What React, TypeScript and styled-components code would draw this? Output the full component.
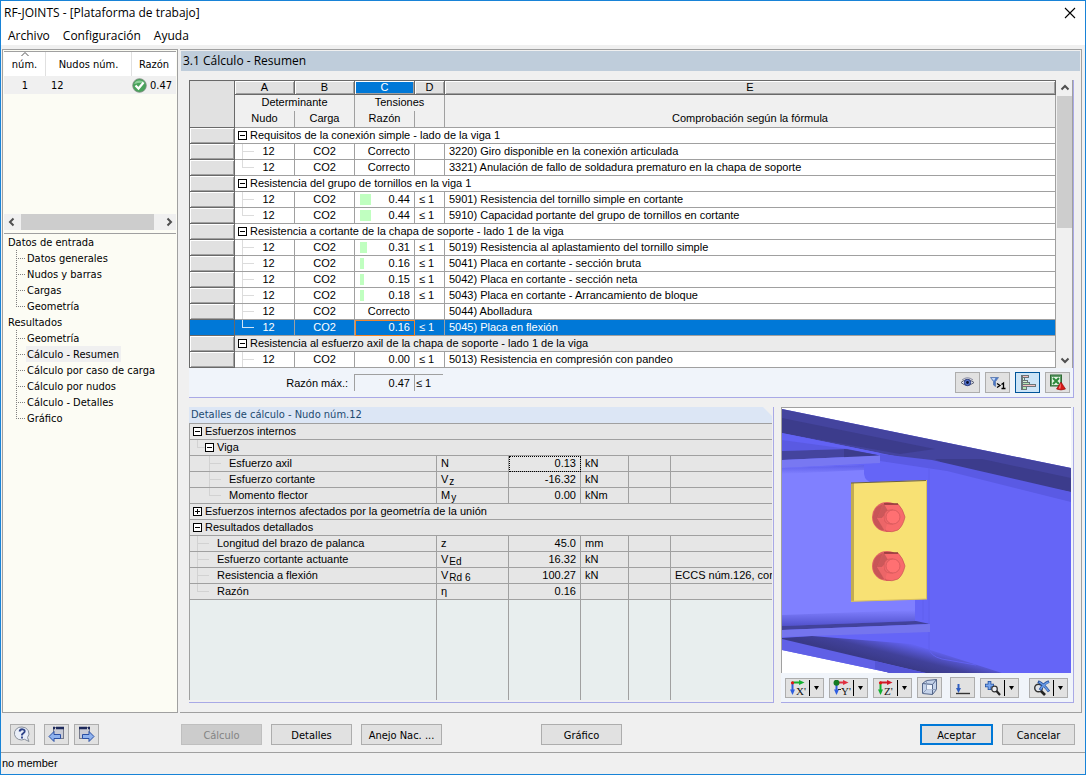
import React from "react";
import styled, { createGlobalStyle, css } from "styled-components";

const UI_FONT = '"Open Sans", "Segoe UI", sans-serif';
const FORM_FONT = '"DejaVu Sans Condensed", Tahoma, sans-serif';
const GRID_FONT = '"Liberation Sans", Arial, sans-serif';

const line = "#a0a0a0";
const lavender = "#a9a9e6";
const accent = "#0078d7";

const GlobalStyle = createGlobalStyle`
  *, *::before, *::after { box-sizing: border-box; }
  body { margin: 0; background: #f0f0f0; color: #000; font-family: ${FORM_FONT}; font-size: 11px; line-height: 16px; }
  button { font: inherit; color: inherit; margin: 0; padding: 0; border-radius: 0; }
  table { border-collapse: separate; border-spacing: 0; table-layout: fixed; width: 100%; }
  th, td { padding: 0; font-weight: 400; white-space: nowrap; overflow: hidden; }
  ul { list-style: none; margin: 0; padding: 0; }
  h1, h2, p { margin: 0; font: inherit; }
  svg { display: block; }
`;

/* Window frame */

const Window = styled.div`
  display: flex;
  flex-direction: column;
  min-height: 100vh;
  border: 1px solid #1883d7;
  background: #f0f0f0;
`;

const TitleBar = styled.header`
  display: flex;
  align-items: center;
  justify-content: space-between;
  height: 24px;
  padding: 0 9px 0 3px;
  background: #fff;
  font: 12px/24px ${UI_FONT};
`;

const CloseButton = styled.button`
  border: 0;
  background: none;
`;

const MenuBar = styled.nav`
  display: flex;
  gap: 13px;
  height: 20px;
  padding: 0 7px;
  background: #fff;
  font: 12px/22px ${UI_FONT};
`;

const MenuItem = styled.button`
  border: 0;
  background: none;
`;

const Body = styled.div`
  display: flex;
  flex: 1;
  gap: 2px;
  padding: 4px 3px 0 1px;
`;

/* Left side: list of cases and navigation tree */

const Sidebar = styled.aside`
  display: flex;
  flex-direction: column;
  flex: none;
  width: 176px;
  padding: 1px 1px 0;
  border: 1px solid ${line};
  background: #fcfcf4;
`;

const CaseList = styled.div`
  display: flex;
  flex-direction: column;
  justify-content: space-between;
  height: 179px;
  border-top: 1px solid ${line};
`;

const CaseHead = styled.th`
  height: 24px;
  padding-bottom: 2px;
  border-right: 1px solid #e0e0e0;
  background: #fff;
  vertical-align: bottom;
  line-height: 18px;
  &:last-child { border-right: 0; }
`;

const SortMark = styled.svg`
  margin: 0 auto;
  height: 4px;
`;

const CaseCell = styled.td<{ $inset?: number }>`
  height: 18px;
  padding-top: 1px;
  padding-left: ${(p) => p.$inset ?? 0}px;
  background: #f0f0f0;
  text-align: ${(p) => (p.$inset === undefined ? "center" : "left")};
`;

const Status = styled.span`
  display: flex;
  align-items: center;
  gap: 3px;
`;

const ScrollTrack = styled.div<{ $vertical?: boolean }>`
  display: flex;
  flex: none;
  flex-direction: ${(p) => (p.$vertical ? "column" : "row")};
  ${(p) => (p.$vertical ? `width: 16px; margin-left: 1px; border-right: 1px solid ${line};` : "height: 16px;")}
  background: #f0f0f0;
`;

const ScrollArrow = styled.button<{ $push?: boolean }>`
  display: grid;
  place-items: center;
  min-width: 15px;
  min-height: 16px;
  border: 0;
  background: none;
  margin-left: ${(p) => (p.$push ? "auto" : 0)};
`;

const ScrollThumb = styled.div<{ $size: string; $vertical?: boolean }>`
  background: #cdcdcd;
  ${(p) => (p.$vertical ? `height: ${p.$size}; margin-bottom: auto;` : `width: ${p.$size}; margin-left: 2px;`)}
`;

const Tree = styled.nav`
  flex: 1;
  margin-top: 3px;
  border-top: 1px solid ${line};
  line-height: 18px;
`;

const TreeTitle = styled.div`
  height: 16px;
  padding-left: 4px;
`;

const TreeItem = styled.li<{ $last?: boolean }>`
  height: 16px;
  padding-left: 22px;
  background-repeat: no-repeat;
  background-image: repeating-linear-gradient(to bottom, #808080 0 1px, transparent 1px 2px),
    repeating-linear-gradient(to right, #808080 0 1px, transparent 1px 2px);
  background-size: 1px ${(p) => (p.$last ? "9px" : "16px")}, 9px 1px;
  background-position: 12px 0, 12px 8px;
`;

const TreeLink = styled.a<{ $active?: boolean }>`
  display: block;
  width: max-content;
  height: 16px;
  padding: 0 2px 0 1px;
  color: inherit;
  text-decoration: none;
  background: ${(p) => (p.$active ? "#f0f0f0" : "transparent")};
`;

/* Right side */

const Main = styled.main`
  display: flex;
  flex: 1;
  flex-direction: column;
  min-width: 0;
  padding: 1px 1px 9px;
  border: solid ${line};
  border-width: 1px 1px 1px 0;
`;

const PageTitle = styled.h1`
  height: 20px;
  padding-left: 2px;
  background: #bfcddb;
  font: 12px/20px ${UI_FONT};
`;

const Sections = styled.div`
  display: flex;
  flex: 1;
  flex-direction: column;
  gap: 9px;
  padding: 9px 6px 0 8px;
`;

const ResultPanel = styled.section`
  border: solid ${lavender};
  border-width: 0 1px 1px 0;
  background: #f0f4fa;
`;

const ResultArea = styled.div`
  display: flex;
  background: #f0f0f0;
  font-family: ${GRID_FONT};
`;

const GridTable = styled.table`
  flex: 1;
  border: solid #696969;
  border-width: 1px 0 0 1px;
  line-height: 15px;
  text-align: center;
`;

const raised = css`
  background: #e1e1e1;
  box-shadow: inset 1px 1px #fff, inset -1px -1px ${line};
  border: solid #696969;
  border-width: 0 1px 1px 0;
`;

const Corner = styled.td`
  background: #e1e1e1;
  border: solid #696969;
  border-width: 0 1px 1px 0;
`;

const ColumnLetter = styled.th<{ $active?: boolean }>`
  ${raised}
  height: 14px;
  line-height: 13px;
  ${(p) => p.$active && `background: ${accent}; color: #fff;`}
`;

const ColumnGroup = styled.th`
  height: 16px;
  border-right: 1px solid ${line};
  vertical-align: top;
`;

const ColumnName = styled.th`
  height: 17px;
  border: solid ${line};
  border-width: 0 1px 1px 0;
  vertical-align: top;
`;

const RowHead = styled.td<{ $active?: boolean }>`
  ${raised}
  height: 16px;
  ${(p) => p.$active && `background: ${accent}; box-shadow: none;`}
`;

const GroupCell = styled.td<{ $shaded?: boolean }>`
  height: 16px;
  border: solid ${line};
  border-width: 0 1px 1px 0;
  background: ${(p) => (p.$shaded ? "#ebebeb" : "#fff")};
  text-align: left;
`;

const GroupLabel = styled.div<{ $depth?: number }>`
  display: flex;
  align-items: center;
  gap: 3px;
  padding-left: ${(p) => 3 + (p.$depth ?? 0) * 12}px;
`;

const Toggle = styled.button`
  display: block;
  flex: none;
  width: 9px;
  height: 9px;
  border: 0;
  background: none;
`;

const DataRow = styled.tr<{ $active?: boolean }>`
  background: ${(p) => (p.$active ? accent : "#fff")};
  color: ${(p) => (p.$active ? "#fff" : "#000")};
`;

const DataCell = styled.td`
  height: 16px;
  border: solid ${line};
  border-width: 0 1px 1px 0;
`;

const branch = css<{ $x: number; $last?: boolean; $tone?: string }>`
  background-repeat: no-repeat;
  background-image: linear-gradient(${(p) => p.$tone ?? "#dcdcdc"}, ${(p) => p.$tone ?? "#dcdcdc"}),
    linear-gradient(${(p) => p.$tone ?? "#dcdcdc"}, ${(p) => p.$tone ?? "#dcdcdc"});
  background-size: 1px ${(p) => (p.$last ? "8px" : "100%")}, 12px 1px;
  background-position: ${(p) => p.$x}px 0, ${(p) => p.$x}px 7px;
`;

const NodeCell = styled(DataCell)<{ $x: number; $last?: boolean; $tone?: string }>`
  ${branch}
  padding-left: 8px;
`;

const RatioCell = styled(DataCell)<{ $focus?: boolean }>`
  ${(p) => p.$focus && "outline: 1px solid #f0862c; outline-offset: -1px;"}
`;

const RatioContent = styled.div`
  display: flex;
  align-items: center;
  justify-content: space-between;
  padding: 0 4px 0 5px;
`;

const RatioBar = styled.span`
  height: 11px;
  background: #c0ffc0;
`;

const LimitCell = styled(DataCell)`
  padding-left: 4px;
  text-align: left;
`;

const FormulaCell = styled(DataCell)`
  padding-left: 4px;
  text-align: left;
`;

const ResultFooter = styled.div`
  display: flex;
  align-items: center;
  height: 29px;
  padding-right: 3px;
`;

const MaxLabel = styled.label`
  width: 165px;
  padding-right: 6px;
  text-align: right;
  font-family: ${GRID_FONT};
`;

const MaxBox = styled.output<{ $w: number; $right?: boolean }>`
  width: ${(p) => p.$w}px;
  height: 17px;
  padding: 0 4px 0 1px;
  border: solid ${line};
  border-width: 1px 0 0 1px;
  text-align: ${(p) => (p.$right ? "right" : "left")};
  font-family: ${GRID_FONT};
`;

const Tools = styled.div`
  display: flex;
  gap: 5px;
  margin-left: auto;
`;

const IconButton = styled.button<{ $active?: boolean }>`
  display: grid;
  place-items: center;
  width: 25px;
  height: 21px;
  border: 1px solid ${(p) => (p.$active ? "#005499" : "#adadad")};
  background: ${(p) => (p.$active ? "#cce4f7" : "#e1e1e1")};
`;

/* Lower half */

const Lower = styled.div`
  display: flex;
  flex: 1;
  gap: 7px;
`;

const DetailPanel = styled.section`
  display: flex;
  flex: 1;
  flex-direction: column;
  min-width: 0;
  padding: 0 1px 2px 0;
  border: solid ${lavender};
  border-width: 0 1px 1px 0;
`;

const DetailTitle = styled.h2`
  height: 16px;
  padding-left: 2px;
  background: #dce6f5;
  color: #1c4a70;
  clip-path: polygon(0 0, calc(100% - 9px) 0, 100% 9px, 100% 100%, 0 100%);
`;

const DetailArea = styled.div`
  display: flex;
  flex: 1;
  flex-direction: column;
  border: solid ${line};
  border-width: 1px 0 0 1px;
  background: #e8eeee;
  font-family: ${GRID_FONT};
`;

const DetailTable = styled.table`
  line-height: 15px;
`;

const DetailGroup = styled.td<{ $x: number; $last?: boolean; $tone?: string }>`
  height: 16px;
  border-bottom: 1px solid ${line};
  background-color: #e6e6e6;
  ${(p) => p.$x > 0 && branch}
`;

const DetailCell = styled.td<{ $right?: boolean; $focus?: boolean }>`
  height: 16px;
  padding: 0 4px 0 4px;
  border: solid ${line};
  border-width: 0 1px 1px 0;
  background: #e6e6e6;
  text-align: ${(p) => (p.$right ? "right" : "left")};
  ${(p) => p.$focus && "outline: 1px dotted #000; outline-offset: -1px;"}
  &:last-child { border-right: 0; }
`;

const DetailName = styled(DetailCell)<{ $x: number; $last?: boolean; $tone?: string }>`
  background-color: #e6e6e6;
  ${branch}
  padding-left: ${(p) => p.$x + 20}px;
`;

const Sub = styled.sub`
  margin-left: 1px;
  font-size: 10px;
  line-height: 8px;
  vertical-align: -2px;
`;

const DetailFiller = styled.div`
  display: grid;
  flex: 1;
  grid-template-columns: 247px 72px 72px 48px 42px 1fr;
`;

const FillerCell = styled.div`
  border-right: 1px solid ${line};
  &:last-child { border-right: 0; }
`;

const ViewPanel = styled.section`
  display: flex;
  flex: none;
  flex-direction: column;
  width: 293px;
  border: solid ${lavender};
  border-width: 0 1px 1px 0;
  background: #f0f4fa;
`;

const Viewport = styled.div`
  flex: 1;
  min-height: 200px;
  margin-right: 2px;
  border: solid ${line};
  border-width: 1px 0 0 1px;
  background: #fff;
  contain: size;
`;

const Scene = styled.svg`
  width: 100%;
  height: 100%;
`;

const ViewTools = styled.div`
  display: flex;
  align-items: center;
  gap: 5px;
  height: 29px;
  padding-left: 4px;
`;

const SplitButton = styled.button`
  display: grid;
  grid-template-columns: 23px 14px;
  align-items: center;
  justify-items: center;
  width: 39px;
  height: 20px;
  border: 1px solid #adadad;
  background: #e1e1e1;
`;

const DropMark = styled.span`
  display: grid;
  place-items: center;
  width: 14px;
  height: 16px;
  border-left: 1px solid #000;
`;

const ToolGap = styled.span<{ $w: number }>`
  width: ${(p) => p.$w}px;
  margin-left: -5px;
`;

/* Bottom */

const Footer = styled.footer`
  display: flex;
  gap: 9px;
  height: 39px;
  padding: 11px 10px 0 9px;
`;

const FooterGroup = styled.div<{ $w?: number; $gap: number; $end?: boolean }>`
  display: flex;
  gap: ${(p) => p.$gap}px;
  width: ${(p) => (p.$w ? `${p.$w}px` : "auto")};
  margin-left: ${(p) => (p.$end ? "auto" : 0)};
`;

const PushButton = styled.button<{ $w: number; $primary?: boolean; $far?: boolean }>`
  width: ${(p) => p.$w}px;
  height: 21px;
  margin-left: ${(p) => (p.$far ? 90 : 0)}px;
  padding-top: 2px;
  border: ${(p) => (p.$primary ? `2px solid ${accent}` : "1px solid #adadad")};
  background: #e1e1e1;
  line-height: 15px;
  &:disabled { background: #ccc; border-color: #bfbfbf; color: #838383; }
`;

const StatusBar = styled.p`
  height: 22px;
  padding-left: 1px;
  border-top: 1px solid ${line};
  font: 11px/20px ${GRID_FONT};
`;

/* Drawings */

const Chevron = ({ d }: { d: string }) => (
  <svg width="10" height="10" viewBox="0 0 10 10" fill="none" stroke="#505050" strokeWidth="2">
    <path d={d} />
  </svg>
);

const ToggleMark = ({ open }: { open: boolean }) => (
  <Toggle type="button" aria-label={open ? "Contraer" : "Expandir"}>
    <svg width="9" height="9" shapeRendering="crispEdges">
      <rect x="0.5" y="0.5" width="8" height="8" fill="#fff" stroke="#000" />
      <path d={open ? "M2 4.5h5" : "M2 4.5h5M4.5 2v5"} stroke="#000" />
    </svg>
  </Toggle>
);

const CheckIcon = () => (
  <svg width="15" height="15" viewBox="0 0 15 15">
    <circle cx="7.5" cy="7.5" r="6.8" fill="#4aa35c" stroke="#7d8a80" strokeWidth="0.8" />
    <path d="M2 6a6 5 0 0 1 11-1q-5-1-11 1z" fill="#8fcf9b" />
    <path d="M3.5 7.5l3 3 5-6" fill="none" stroke="#fff" strokeWidth="2.2" />
  </svg>
);

const EyeIcon = () => (
  <svg width="15" height="13" viewBox="0 0 15 13">
    <path d="M1 6.5Q7 1 14 6.5Q7 12 1 6.5z" fill="#f2f4fb" stroke="#555b70" />
    <circle cx="7.5" cy="6.5" r="3.2" fill="#5474cf" stroke="#2b3c80" />
    <circle cx="7.5" cy="6.5" r="1.4" fill="#0b1030" />
    <path d="M2 4Q7.500-0.500 13 4" fill="none" stroke="#8286a0" />
  </svg>
);

const FilterIcon = () => (
  <svg width="18" height="16" viewBox="0 0 18 16">
    <path d="M1.500 2.500h8l-3 4v5l-2-1.500v-3.500z" fill="#4a78c8" stroke="#5a78b0" strokeWidth="0.800" />
    <path d="M2.500 3h4l-1.500 3z" fill="#c4d8f6" />
    <path d="M8 8.500l3 2-3 2" fill="none" stroke="#000" strokeWidth="1.300" />
    <path d="M12.500 9.500l2-1.500v6M12.500 13.500h4" fill="none" stroke="#000" strokeWidth="1.300" />
  </svg>
);

const BarsIcon = () => (
  <svg width="17" height="17" viewBox="0 0 17 17" shapeRendering="crispEdges">
    <path d="M2.500 1v15" stroke="#6a7478" />
    <g strokeWidth="1" stroke="#6a7478">
      <path d="M3 1.500h6v2H3z" fill="#f5c0c0" />
      <path d="M3 3.500h2v3H3z" fill="#d5f3d5" />
      <path d="M3 6.500h5v2H3z" fill="#d5f3d5" />
      <path d="M3 8.500h7v2H3z" fill="#b5e8b5" />
      <path d="M3 10.500h13v2H3z" fill="#f5c0c0" />
      <path d="M3 12.500h4v3H3z" fill="#b5e8b5" />
    </g>
  </svg>
);

const ExcelIcon = () => (
  <svg width="17" height="17" viewBox="0 0 17 17">
    <rect x="1.500" y="1" width="11" height="11" fill="#5f9c68" stroke="#2e6b36" />
    <rect x="3" y="3" width="8" height="8" fill="#e4f2e4" />
    <path d="M4 4l6 6M10 4l-6 6" stroke="#2b8a3a" strokeWidth="2" />
    <path d="M12 8l4.500 7q-4.500 2-9 0z" fill="#d81818" stroke="#8c0c0c" strokeWidth="0.600" />
    <path d="M12 9l-2.500 5.500h2z" fill="#ff7d7d" />
  </svg>
);

const HelpIcon = () => (
  <svg width="17" height="17" viewBox="0 0 17 17">
    <path d="M8 1a7 6.500 0 0 1 5.500 10.500L15 15.500l-4.500-2.200A7 6.500 0 1 1 8 1z" fill="#e9eef8" stroke="#8a919c" />
    <path d="M5.500 5.500q.5-2.500 3.200-2.200 2.700.5 1.800 2.800L8 8.500V9.500M8 10.500v2" fill="none" stroke="#2d4288" strokeWidth="1.800" />
  </svg>
);

const WindowArrowIcon = ({ next }: { next?: boolean }) => (
  <svg width="17" height="17" viewBox="0 0 17 17">
    <g transform={next ? "matrix(-1 0 0 1 17 0)" : undefined}>
      <rect x="5.500" y="1.500" width="10" height="11" fill="#c9cbd6" stroke="#777b8c" />
      <path d="M5 2h11" stroke="#1e2a5c" strokeWidth="2.500" strokeDasharray="2 1 8 0" />
    </g>
    <path
      d={next ? "M16 10.500l-5-5v3H4.500v4H11v3z" : "M1 10.500l5-5v3h6.500v4H6v3z"}
      fill="#8fb2ee"
      stroke="#2a4fa4"
    />
  </svg>
);

const AxisIcon = ({ name, across, down, minus }: { name: string; across: string; down: string; minus?: boolean }) => (
  <svg width="18" height="16" viewBox="0 0 18 16">
    <path d="M3 2.500h8" stroke={across} strokeWidth="2" />
    <path d="M10 0l5.500 2.500L10 5z" fill={across} />
    <path d="M3.500 3v8" stroke={down} strokeWidth="2" />
    <path d="M1 9.500h5L3.500 15z" fill={down} />
    <circle cx="3.500" cy="2.800" r={minus ? 3 : 1.600} fill={minus ? "#137a22" : "#e01818"} />
    {minus && <path d="M5 9.500h3" stroke="#222" />}
    <text x={minus ? 8 : 7} y="15" fontFamily="Liberation Serif, serif" fontSize="11" fill="#111">
      {name}
    </text>
  </svg>
);

const CubeIcon = () => (
  <svg width="17" height="17" viewBox="0 0 17 17" fill="none" stroke="#55678a">
    <path d="M5.500 1.500l10-1v10l-4 5-10-1v-10z" fill="#c5d3ea" />
    <path d="M1.500 4.500l10 1v10M11.500 5.500l4-5" />
    <path d="M5.500 1.500v9l10 0M5.500 10.500l-4 4" stroke="#8c9dba" />
    <path d="M6 6l5 0v4.500H6z" fill="#eef3fb" stroke="none" />
  </svg>
);

const BaseIcon = () => (
  <svg width="16" height="16" viewBox="0 0 16 16">
    <path d="M3.500 4v5" stroke="#2f5ec0" strokeWidth="2" />
    <path d="M1 8h5l-2.500 5z" fill="#2f5ec0" />
    <path d="M1 13.500h14" stroke="#333" strokeWidth="1.400" />
  </svg>
);

const ZoomIcon = ({ clear }: { clear?: boolean }) =>
  clear ? (
    <svg width="18" height="16" viewBox="0 0 18 16">
      <circle cx="5.500" cy="8" r="3.800" fill="#dfe3ea" stroke="#333" strokeWidth="1.400" />
      <path d="M8 11l4 4" stroke="#222" strokeWidth="2.600" />
      <path d="M5 1.500q6 3 11 10M16 1.500Q10 4 7 10" fill="none" stroke="#234f9c" strokeWidth="2.800" />
      <path d="M6 2q5.500 3 9.500 9M15.500 2Q10 4.500 7.500 9.500" fill="none" stroke="#6a9be6" strokeWidth="1.400" />
    </svg>
  ) : (
    <svg width="18" height="16" viewBox="0 0 18 16">
      <path d="M5.500 1v9M1 5.500h9" stroke="#234f9c" strokeWidth="3.600" />
      <path d="M5.500 1.700v7.600M1.700 5.500h7.600" stroke="#7aa7ee" strokeWidth="2" />
      <circle cx="10.500" cy="9" r="2.800" fill="#eceff5" stroke="#333" strokeWidth="1.200" />
      <path d="M12.500 11l3.500 4" stroke="#222" strokeWidth="2.200" />
    </svg>
  );

const Bolt = ({ y }: { y: number }) => (
  <g transform={`translate(107 ${y})`}>
    <ellipse cx="-2" cy="0" rx="15" ry="15" fill="#e06264" />
    <path d="M-12-10L-6-13L-12 1L-5 13L-8 13Q-17 8-16-1Q-15-7-12-10z" fill="#c85557" />
    <path d="M-5-13H9Q14-8 16 0Q14 9 9 13Q3 16-3 14L-12 1z" fill="#f86a6c" stroke="#c04b4f" strokeWidth="0.600" />
    <path d="M-5-13H9" stroke="#7c2d33" strokeWidth="1.200" />
    <path d="M-5-13L-12 1L-7 1L-1-6z" fill="#cc585a" />
    <path d="M-12 1L-4 14L-2 7L-7 1z" fill="#ec6668" />
    <path d="M1-7q-6 0-6 7t6 7h3V-7z" fill="#ee686a" stroke="#cc5255" strokeWidth="0.600" />
    <circle cx="4" cy="0" r="7" fill="#ff7072" stroke="#d2585b" strokeWidth="0.800" />
  </g>
);

const JointScene = () => (
  <Scene viewBox="0 0 289 265" preserveAspectRatio="xMidYMid slice" role="img" aria-label="Vista de la unión">
    <defs>
      <linearGradient id="webTop" x1="0" y1="0" x2="0" y2="1">
        <stop offset="0" stopColor="#5e5eea" />
        <stop offset="1" stopColor="#8080ff" />
      </linearGradient>
      <linearGradient id="webBottom" x1="0" y1="0" x2="0" y2="1">
        <stop offset="0" stopColor="#8080ff" />
        <stop offset="1" stopColor="#5151cc" />
      </linearGradient>
      <linearGradient id="lowerShade" gradientUnits="userSpaceOnUse" x1="130" y1="261" x2="136" y2="237">
        <stop offset="0" stopColor="#3a3a88" />
        <stop offset="0.400" stopColor="#41419a" />
        <stop offset="1" stopColor="#6565f7" />
      </linearGradient>
    </defs>
    <rect width="289" height="265" fill="#fff" />
    <path d="M0 1L289 60V265H109L0 242z" fill="#6565f7" />
    {/* upper flange of the beam */}
    <path d="M0 1L289 60V84L0 25z" fill="#44449e" />
    <path d="M0 10L153 41L118 46L0 25z" fill="#3c3c8c" />
    <path d="M153 51L200 51L289 70V84L170 60z" fill="#3c3c8c" />
    <path d="M0 25L98 45L98 48L0 32z" fill="#6262f4" />
    <path d="M98 46L150 52L289 84V94L165 63L98 53z" fill="#5a5ae4" />
    <path d="M0 32L66 41L0 43z" fill="#5a5ae2" />
    {/* upper flange of the secondary beam */}
    <path d="M0 43L65 41L98 47.500L0 52z" fill="#44449e" />
    <path d="M62 41L98 47.500L62 50z" fill="#3c3c8c" />
    <path d="M0 52L98 47.500V55L0 60z" fill="#7878f2" />
    {/* secondary beam web */}
    <path d="M0 60L82 57V66Q83 74 92 75H133V208L0 212z" fill="#8080ff" />
    <path d="M0 60L82 57V62L0 66z" fill="url(#webTop)" />
    <path d="M0 207L133 202V213L0 218z" fill="url(#webBottom)" />
    {/* inner face of the lower beam flange */}
    <path d="M0 230L30 228L130 236L220 265H108L0 233z" fill="url(#lowerShade)" />
    <path d="M0 231L144 265H109L0 242z" fill="#6060e6" />
    <path d="M93 253L109 257L144 265H109L93 261z" fill="#5555d6" />
    {/* lower flange of the secondary beam */}
    <path d="M0 218L134 213L148 216L0 222z" fill="#42429a" />
    <path d="M0 222L148 216V224L0 229z" fill="#7575ee" />
    <path d="M141 75V212M147 60V216M147 224V240Q148 248 160 251L194 257" fill="none" stroke="#6161ee" />
    {/* end plate with its bolts */}
    <path d="M69 75L145 72V191L69 193.500z" fill="#f8e174" />
    <path d="M69 75L72 74.800V193.400L69 193.500z" fill="#c4ac52" />
    <path d="M69 75L145 72.500" stroke="#6c6240" strokeWidth="1.200" />
    <path d="M144.500 72V191M69 193.300L145 191" stroke="#d8c05e" />
    <Bolt y={109} />
    <Bolt y={158} />
  </Scene>
);

/* Data */

type Result = { ratio: number | null; text: string; active?: boolean; last?: boolean };
type Group = { title: string; shaded?: boolean; rows: Result[] };

const groups: Group[] = [
  {
    title: "Requisitos de la conexión simple - lado de la viga 1",
    rows: [
      { ratio: null, text: "3220) Giro disponible en la conexión articulada" },
      { ratio: null, text: "3321) Anulación de fallo de soldadura prematuro en la chapa de soporte", last: true },
    ],
  },
  {
    title: "Resistencia del grupo de tornillos en la viga 1",
    rows: [
      { ratio: 0.44, text: "5901) Resistencia del tornillo simple en cortante" },
      { ratio: 0.44, text: "5910) Capacidad portante del grupo de tornillos en cortante", last: true },
    ],
  },
  {
    title: "Resistencia a cortante de la chapa de soporte - lado 1 de la viga",
    rows: [
      { ratio: 0.31, text: "5019) Resistencia al aplastamiento del tornillo simple" },
      { ratio: 0.16, text: "5041) Placa en cortante - sección bruta" },
      { ratio: 0.15, text: "5042) Placa en cortante - sección neta" },
      { ratio: 0.18, text: "5043) Placa en cortante - Arrancamiento de bloque" },
      { ratio: null, text: "5044) Abolladura" },
      { ratio: 0.16, text: "5045) Placa en flexión", active: true, last: true },
    ],
  },
  {
    title: "Resistencia al esfuerzo axil de la chapa de soporte - lado 1 de la viga",
    shaded: true,
    rows: [{ ratio: 0, text: "5013) Resistencia en compresión con pandeo" }],
  },
];

type Detail =
  | { group: string; depth: number; open: boolean }
  | { name: string; depth: number; symbol: string; sub?: string; value: string; unit: string; note?: string; last?: boolean; focus?: boolean };

const details: Detail[] = [
  { group: "Esfuerzos internos", depth: 0, open: true },
  { group: "Viga", depth: 1, open: true },
  { name: "Esfuerzo axil", depth: 1, symbol: "N", value: "0.13", unit: "kN", focus: true },
  { name: "Esfuerzo cortante", depth: 1, symbol: "V", sub: "z", value: "-16.32", unit: "kN" },
  { name: "Momento flector", depth: 1, symbol: "M", sub: "y", value: "0.00", unit: "kNm", last: true },
  { group: "Esfuerzos internos afectados por la geometría de la unión", depth: 0, open: false },
  { group: "Resultados detallados", depth: 0, open: true },
  { name: "Longitud del brazo de palanca", depth: 0, symbol: "z", value: "45.0", unit: "mm" },
  { name: "Esfuerzo cortante actuante", depth: 0, symbol: "V", sub: "Ed", value: "16.32", unit: "kN" },
  { name: "Resistencia a flexión", depth: 0, symbol: "V", sub: "Rd 6", value: "100.27", unit: "kN", note: "ECCS núm.126, cor" },
  { name: "Razón", depth: 0, symbol: "η", value: "0.16", unit: "", last: true },
];

const tree = [
  { title: "Datos de entrada", items: ["Datos generales", "Nudos y barras", "Cargas", "Geometría"] },
  {
    title: "Resultados",
    items: ["Geometría", "Cálculo - Resumen", "Cálculo por caso de carga", "Cálculo por nudos", "Cálculo - Detalles", "Gráfico"],
  },
];

const ResultRow = ({ row }: { row: Result }) => (
  <DataRow $active={row.active}>
    <RowHead $active={row.active} />
    <NodeCell $x={7} $last={row.last} $tone={row.active ? "#cfe4f7" : undefined}>12</NodeCell>
    <DataCell>CO2</DataCell>
    <RatioCell $focus={row.active}>
      <RatioContent>
        <RatioBar style={{ width: row.active ? 0 : Math.round((row.ratio ?? 0) * 24) }} />
        {row.ratio === null ? "Correcto" : row.ratio.toFixed(2)}
      </RatioContent>
    </RatioCell>
    <LimitCell>{row.ratio === null ? "" : "≤ 1"}</LimitCell>
    <FormulaCell>{row.text}</FormulaCell>
  </DataRow>
);

const DetailRow = ({ row }: { row: Detail }) =>
  "group" in row ? (
    <tr>
      <DetailGroup colSpan={6} $x={row.depth ? 7 : 0} $last $tone="#d2d2d2">
        <GroupLabel $depth={row.depth}>
          <ToggleMark open={row.open} />
          {row.group}
        </GroupLabel>
      </DetailGroup>
    </tr>
  ) : (
    <tr>
      <DetailName $x={7 + row.depth * 12} $last={row.last} $tone="#d2d2d2">{row.name}</DetailName>
      <DetailCell>
        {row.symbol}
        {row.sub && <Sub>{row.sub}</Sub>}
      </DetailCell>
      <DetailCell $right $focus={row.focus}>{row.value}</DetailCell>
      <DetailCell>{row.unit}</DetailCell>
      <DetailCell />
      <DetailCell>{row.note}</DetailCell>
    </tr>
  );

const Split = ({ label, children }: { label: string; children: React.ReactNode }) => (
  <SplitButton type="button" aria-label={label}>
    <span>{children}</span>
    <DropMark>
      <svg width="5" height="4">
        <path d="M0 0h5L2.500 4z" fill="#000" />
      </svg>
    </DropMark>
  </SplitButton>
);

export default function App() {
  return (
    <Window>
      <GlobalStyle />
      <TitleBar>
        <span>RF-JOINTS - [Plataforma de trabajo]</span>
        <CloseButton type="button" aria-label="Cerrar">
          <svg width="12" height="12" stroke="#000" strokeWidth="1.100">
            <path d="M1 1l10 10M11 1L1 11" />
          </svg>
        </CloseButton>
      </TitleBar>
      <MenuBar>
        <MenuItem type="button">Archivo</MenuItem>
        <MenuItem type="button">Configuración</MenuItem>
        <MenuItem type="button">Ayuda</MenuItem>
      </MenuBar>

      <Body>
        <Sidebar>
          <CaseList>
            <table>
              <colgroup>
                <col style={{ width: 42 }} />
                <col style={{ width: 86 }} />
                <col />
              </colgroup>
              <thead>
                <tr>
                  <CaseHead>
                    <SortMark width="8" viewBox="0 0 8 4" fill="none" stroke="#555">
                      <path d="M0.500 4L4 0.500L7.500 4" />
                    </SortMark>
                    núm.
                  </CaseHead>
                  <CaseHead>Nudos núm.</CaseHead>
                  <CaseHead>Razón</CaseHead>
                </tr>
              </thead>
              <tbody>
                <tr>
                  <CaseCell>1</CaseCell>
                  <CaseCell $inset={5}>12</CaseCell>
                  <CaseCell $inset={0}>
                    <Status>
                      <CheckIcon />
                      0.47
                    </Status>
                  </CaseCell>
                </tr>
              </tbody>
            </table>
            <ScrollTrack>
              <ScrollArrow type="button" aria-label="Izquierda">
                <Chevron d="M6.500 1.500L3 5l3.500 3.500" />
              </ScrollArrow>
              <ScrollThumb $size="133px" />
              <ScrollArrow type="button" aria-label="Derecha" $push>
                <Chevron d="M3.500 1.500L7 5L3.500 8.500" />
              </ScrollArrow>
            </ScrollTrack>
          </CaseList>
          <Tree>
            <ul>
              {tree.map((group) => (
                <li key={group.title}>
                  <TreeTitle>{group.title}</TreeTitle>
                  <ul>
                    {group.items.map((item, i) => (
                      <TreeItem key={item} $last={i === group.items.length - 1}>
                        <TreeLink href="#" $active={item === "Cálculo - Resumen"}>{item}</TreeLink>
                      </TreeItem>
                    ))}
                  </ul>
                </li>
              ))}
            </ul>
          </Tree>
        </Sidebar>

        <Main>
          <PageTitle>3.1 Cálculo - Resumen</PageTitle>
          <Sections>
            <ResultPanel>
              <ResultArea>
                <GridTable>
                  <colgroup>
                    <col style={{ width: 45 }} />
                    <col style={{ width: 60 }} />
                    <col style={{ width: 60 }} />
                    <col style={{ width: 60 }} />
                    <col style={{ width: 30 }} />
                    <col />
                  </colgroup>
                  <thead>
                    <tr>
                      <Corner rowSpan={3} />
                      {["A", "B", "C", "D", "E"].map((letter) => (
                        <ColumnLetter key={letter} $active={letter === "C"}>{letter}</ColumnLetter>
                      ))}
                    </tr>
                    <tr>
                      <ColumnGroup colSpan={2}>Determinante</ColumnGroup>
                      <ColumnGroup colSpan={2}>Tensiones</ColumnGroup>
                      <ColumnGroup />
                    </tr>
                    <tr>
                      <ColumnName>Nudo</ColumnName>
                      <ColumnName>Carga</ColumnName>
                      <ColumnName>Razón</ColumnName>
                      <ColumnName />
                      <ColumnName>Comprobación según la fórmula</ColumnName>
                    </tr>
                  </thead>
                  <tbody>
                    {groups.map((group) => (
                      <React.Fragment key={group.title}>
                        <tr>
                          <RowHead />
                          <GroupCell colSpan={5} $shaded={group.shaded}>
                            <GroupLabel>
                              <ToggleMark open />
                              {group.title}
                            </GroupLabel>
                          </GroupCell>
                        </tr>
                        {group.rows.map((row) => (
                          <ResultRow key={row.text} row={row} />
                        ))}
                      </React.Fragment>
                    ))}
                  </tbody>
                </GridTable>
                <ScrollTrack $vertical>
                  <ScrollArrow type="button" aria-label="Arriba">
                    <Chevron d="M1.500 6.500L5 3l3.500 3.500" />
                  </ScrollArrow>
                  <ScrollThumb $vertical $size="132px" />
                  <ScrollArrow type="button" aria-label="Abajo">
                    <Chevron d="M1.500 3.500L5 7L8.500 3.500" />
                  </ScrollArrow>
                </ScrollTrack>
              </ResultArea>
              <ResultFooter>
                <MaxLabel htmlFor="max-ratio">Razón máx.:</MaxLabel>
                <MaxBox id="max-ratio" $w={60} $right>0.47</MaxBox>
                <MaxBox $w={29}>≤ 1</MaxBox>
                <Tools>
                  <IconButton type="button" aria-label="Ver"><EyeIcon /></IconButton>
                  <IconButton type="button" aria-label="Filtrar razones mayores que 1"><FilterIcon /></IconButton>
                  <IconButton type="button" aria-label="Barras de razón" $active><BarsIcon /></IconButton>
                  <IconButton type="button" aria-label="Exportar a Excel"><ExcelIcon /></IconButton>
                </Tools>
              </ResultFooter>
            </ResultPanel>

            <Lower>
              <DetailPanel>
                <DetailTitle>Detalles de cálculo - Nudo núm.12</DetailTitle>
                <DetailArea>
                  <DetailTable>
                    <colgroup>
                      <col style={{ width: 247 }} />
                      <col style={{ width: 72 }} />
                      <col style={{ width: 72 }} />
                      <col style={{ width: 48 }} />
                      <col style={{ width: 42 }} />
                      <col />
                    </colgroup>
                    <tbody>
                      {details.map((row, i) => (
                        <DetailRow key={i} row={row} />
                      ))}
                    </tbody>
                  </DetailTable>
                  <DetailFiller>
                    {[0, 1, 2, 3, 4, 5].map((i) => (
                      <FillerCell key={i} />
                    ))}
                  </DetailFiller>
                </DetailArea>
              </DetailPanel>

              <ViewPanel>
                <Viewport>
                  <JointScene />
                </Viewport>
                <ViewTools>
                  <Split label="Vista en X"><AxisIcon name="X'" across="#12b030" down="#2f5ee0" /></Split>
                  <Split label="Vista en -Y"><AxisIcon name="Y'" across="#e03040" down="#2f5ee0" minus /></Split>
                  <Split label="Vista en Z"><AxisIcon name="Z'" across="#d01828" down="#12b030" /></Split>
                  <IconButton type="button" aria-label="Vista isométrica"><CubeIcon /></IconButton>
                  <ToolGap $w={3} />
                  <IconButton type="button" aria-label="Mostrar cargas"><BaseIcon /></IconButton>
                  <Split label="Ampliar"><ZoomIcon /></Split>
                  <ToolGap $w={5} />
                  <Split label="Restablecer"><ZoomIcon clear /></Split>
                </ViewTools>
              </ViewPanel>
            </Lower>
          </Sections>
        </Main>
      </Body>

      <Footer>
        <FooterGroup $w={162} $gap={5}>
          <IconButton type="button" aria-label="Ayuda"><HelpIcon /></IconButton>
          <ToolGap $w={4} />
          <IconButton type="button" aria-label="Tabla anterior"><WindowArrowIcon /></IconButton>
          <IconButton type="button" aria-label="Tabla siguiente"><WindowArrowIcon next /></IconButton>
        </FooterGroup>
        <PushButton type="button" $w={81} disabled>Cálculo</PushButton>
        <PushButton type="button" $w={81}>Detalles</PushButton>
        <PushButton type="button" $w={81}>Anejo Nac. ...</PushButton>
        <PushButton type="button" $w={81} $far>Gráfico</PushButton>
        <FooterGroup $gap={9} $end>
          <PushButton type="button" $w={73} $primary>Aceptar</PushButton>
          <PushButton type="button" $w={73}>Cancelar</PushButton>
        </FooterGroup>
      </Footer>
      <StatusBar>no member</StatusBar>
    </Window>
  );
}
